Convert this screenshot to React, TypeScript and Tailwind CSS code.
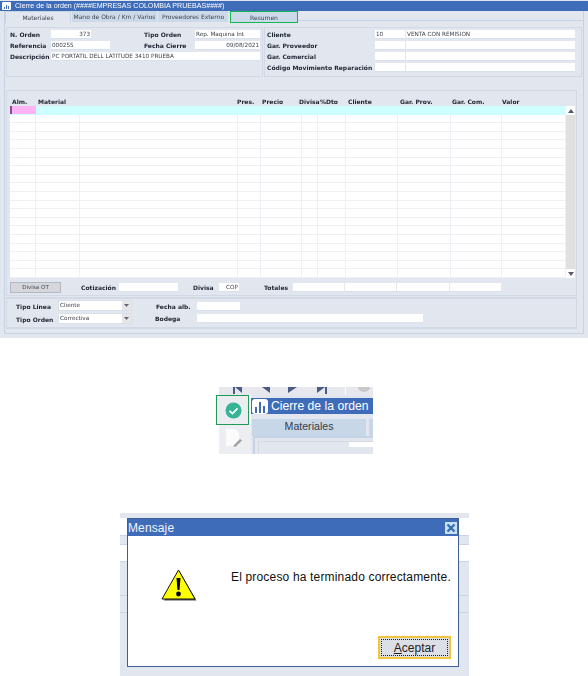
import React from "react";

const sans = "[font-family:'DejaVu_Sans',sans-serif]";

function Label({ children, className = "" }: { children: React.ReactNode; className?: string }) {
  return <span className={`font-bold text-[6px] leading-[9px] whitespace-nowrap text-[#1c2430] ${className}`}>{children}</span>;
}

function Input({ className = "", children, right }: { className?: string; children?: React.ReactNode; right?: boolean }) {
  return (
    <div className={`h-[9px] bg-white border-b border-[#d8e0ec] text-[5.7px] leading-[9px] px-px text-[#3a3f48] whitespace-nowrap overflow-hidden shrink-0 ${right ? "text-right" : ""} ${className}`}>
      {children}
    </div>
  );
}

function Tab({ children, className = "" }: { children: React.ReactNode; className?: string }) {
  return <div className={`flex items-center justify-center text-[6px] text-[#3c4450] whitespace-nowrap ${className}`}>{children}</div>;
}

function Select({ value }: { value: string }) {
  return (
    <div className="flex w-[74px] h-[11px] bg-white border border-[#d9e0ea] shrink-0">
      <div className="flex-1 text-[5.7px] leading-[9px] pl-px text-[#3a3f48]">{value}</div>
      <div className="w-[9px] bg-[#e6e6e6] flex items-center justify-center">
        <svg width="5" height="3" viewBox="0 0 5 3"><path d="M0 0h5L2.5 3z" fill="#666a78" /></svg>
      </div>
    </div>
  );
}

const gridCols = [26, 44, 158, 23, 41, 16, 28, 52, 53, 51, 64];
const headers: [string, number][] = [
  ["Alm.", 26],
  ["Material", 199],
  ["Pres.", 25],
  ["Precio", 37],
  ["Divisa", 21],
  ["%Dto", 28],
  ["Cliente", 52],
  ["Gar. Prov.", 52],
  ["Gar. Com.", 50],
  ["Valor", 40],
];
const rows = Array.from({ length: 20 }, (_, i) => i);

function MainWindow() {
  return (
    <div className="w-[588px] h-[338px] bg-[#e2e6ee] flex flex-col blur-[0.25px]">
      <div className="h-[10px] mt-px bg-[#3f6cb9] flex items-center pl-[2px] gap-[4px] shrink-0">
        <div className="w-[9px] h-[8px] bg-white rounded-[1px] flex items-end justify-center gap-px pb-px">
          <div className="w-px h-[2px] bg-[#3f6cb9]" />
          <div className="w-px h-[4px] bg-[#3f6cb9]" />
          <div className="w-px h-[3px] bg-[#3f6cb9]" />
        </div>
        <span className="text-[7.1px] text-white whitespace-nowrap [font-family:'Liberation_Sans',sans-serif]">
          Cierre de la orden (####EMPRESAS COLOMBIA PRUEBAS####)
        </span>
      </div>
      <div className="mx-[4px] flex-1 mb-[4px] border-x border-b border-[#c6d3e5] flex flex-col">
        <div className="h-[11px] flex shrink-0">
          <Tab className="w-[66px] border-x border-t border-[#c6d3e5] h-[12px] bg-[#e2e6ee]">Materiales</Tab>
          <Tab className="w-[85px] ml-px bg-[#ccd9e9]">Mano de Obra / Km / Varios</Tab>
          <Tab className="w-[70px] ml-px bg-[#ccd9e9]">Proveedores Externo</Tab>
          <Tab className="w-[68px] h-[12px] ml-[2px] bg-[#ccd9e9] border border-[#12b850]">Resumen</Tab>
          <div className="flex-1 border-b border-[#c6d3e5] mb-px" />
        </div>
        <div className="flex gap-[1px] mt-[5px] ml-px mr-px h-[50px] shrink-0">
          <div className="w-[257px] border border-[#d2d9e4] pl-[3px] pt-[2px] flex flex-col gap-[2px]">
            <div className="flex items-center">
              <Label className="w-[41px]">N. Orden</Label>
              <Input className="w-[40px]" right>373</Input>
              <Label className="ml-[53px] w-[51px]">Tipo Orden</Label>
              <Input className="w-[65px]">Rep. Maquina Int</Input>
            </div>
            <div className="flex items-center">
              <Label className="w-[41px]">Referencia</Label>
              <Input className="w-[59px]">000255</Input>
              <Label className="ml-[34px] w-[51px]">Fecha Cierre</Label>
              <Input className="w-[65px]" right>09/08/2021</Input>
            </div>
            <div className="flex items-center">
              <Label className="w-[41px]">Descripción</Label>
              <Input className="w-[209px]">PC PORTATIL DELL LATITUDE 3410 PRUEBA</Input>
            </div>
          </div>
          <div className="flex-1 border border-[#d2d9e4] pl-[2px] pt-[2px] flex flex-col gap-[2px]">
            {[
              ["Cliente", "10", "VENTA CON REMISION"],
              ["Gar. Proveedor", "", ""],
              ["Gar. Comercial", "", ""],
              ["Código Movimiento Reparación", "", ""],
            ].map(([l, a, b]) => (
              <div key={l} className="flex items-center">
                <Label className="w-[108px]">{l}</Label>
                <Input className="w-[30px]">{a}</Input>
                <Input className="w-[169px] ml-px">{b}</Input>
              </div>
            ))}
          </div>
        </div>
        <div className="mt-[13px] ml-px w-[571px] h-[206px] border-t border-x border-b border-[#d2d9e4] shrink-0 flex flex-col">
          <div className="flex pl-[5px] pt-[6px] h-[15px] shrink-0">
            {headers.map(([h, w]) => (
              <div key={h} style={{ width: w }} className="flex items-start">
                <Label>{h}</Label>
              </div>
            ))}
          </div>
          <div className="flex ml-[3px] h-[172px] shrink-0">
            <div className="w-[556px] flex flex-col">
              {rows.map((r) => (
                <div key={r} className={`flex-1 flex border-b ${r === 0 ? "bg-[#ceffff] border-[#ceffff]" : "bg-white border-[#eef0f5]"}`}>
                  {gridCols.map((w, i) => (
                    <div
                      key={i}
                      style={{ width: w }}
                      className={`${r === 0 && i === 0 ? "bg-[#fcb4f4] border-l-2 border-l-[#8a4a90]" : r === 0 ? "" : "border-r border-[#eef0f5]"}`}
                    />
                  ))}
                </div>
              ))}
            </div>
            <div className="w-[9px] bg-[#e0e0e0] flex flex-col justify-between">
              <div className="h-[9px] bg-white flex items-center justify-center">
                <svg width="6" height="4" viewBox="0 0 6 4"><path d="M3 0l3 4H0z" fill="#555a70" /></svg>
              </div>
              <div className="h-[9px] bg-white flex items-center justify-center">
                <svg width="6" height="4" viewBox="0 0 6 4"><path d="M0 0h6L3 4z" fill="#555a70" /></svg>
              </div>
            </div>
          </div>
          <div className="flex items-center pl-[3px] mt-[4px]">
            <div className="w-[51px] h-[11px] bg-[#d5d7dc] border border-[#b4b8c0] text-[5.6px] leading-[8px] text-center text-[#444a55]">Divisa OT</div>
            <Label className="ml-[20px] w-[38px]">Cotización</Label>
            <Input className="w-[59px]" />
            <Label className="ml-[15px] w-[26px]">Divisa</Label>
            <Input className="w-[20px]" right>COP</Input>
            <Label className="ml-[25px] w-[29px]">Totales</Label>
            <Input className="w-[51px]" />
            <Input className="w-[51px] ml-px" />
            <Input className="w-[52px] ml-px" />
            <Input className="w-[51px] ml-px" />
          </div>
        </div>
        <div className="mt-px ml-px w-[571px] h-[32px] border-t-2 border-b-2 border-x border-[#d2d9e4] shrink-0 flex pl-[9px] pt-px">
          <div className="flex flex-col gap-[2px] w-[139px]">
            <div className="flex items-center">
              <Label className="w-[42px] pt-px">Tipo Linea</Label>
              <Select value="Cliente" />
            </div>
            <div className="flex items-center">
              <Label className="w-[42px] pt-px">Tipo Orden</Label>
              <Select value="Correctiva" />
            </div>
          </div>
          <div className="flex flex-col gap-[3px] pt-[2px]">
            <div className="flex items-center">
              <Label className="w-[42px] pl-px">Fecha alb.</Label>
              <Input className="w-[43px]" />
            </div>
            <div className="flex items-center">
              <Label className="w-[42px]">Bodega</Label>
              <Input className="w-[226px]" />
            </div>
          </div>
        </div>
      </div>
    </div>
  );
}

function Crop() {
  return (
    <div className="ml-[216px] mt-[49px] w-[157px] h-[67px] flex flex-col">
      <div className="ml-[3px] h-[8px] bg-[#e6e8ee] shrink-0">
        <svg width="154" height="8" viewBox="0 0 154 8">
          <path d="M14 0h2v7h-2zM16 0h7v6zM43 0h8v6zM69 0h9l-9 6zM98 0h8l-8 6zM106 0h2v7h-2z" fill="#4a5c86" />
          <rect x="126" y="0" width="1" height="8" fill="#fff" />
          <ellipse cx="145" cy="0" rx="6" ry="5" fill="#c8c8c8" />
        </svg>
      </div>
      <div className="flex flex-1 min-h-0">
        <div className="w-[35px] shrink-0 flex flex-col">
          <div className="w-[33px] h-[30px] border-[1.5px] border-[#1f9a58] bg-[#ebedf1] flex items-center justify-center pl-[2px] pt-[1px]">
            <svg width="17" height="17" viewBox="0 0 17 17">
              <circle cx="8.5" cy="8.5" r="8" fill="#37b397" />
              <path d="M4.5 8.8l3 2.8 5-5.2" fill="none" stroke="#fff" strokeWidth="1.7" />
            </svg>
          </div>
          <div className="ml-[3px] flex-1 bg-[#eceef2] flex justify-center pt-[4px] pr-[3px]">
            <svg width="18" height="20" viewBox="0 0 18 20">
              <path d="M1 0h9l4 4v13H1z" fill="#fbfbfb" />
              <path d="M9 16l6-6 2 1.5-6 6-2.5 .5z" fill="#a0a0a0" />
            </svg>
          </div>
        </div>
        <div className="flex-1 min-w-0 bg-[#e2e6ee] flex flex-col overflow-hidden">
          <div className="h-[16px] mt-[3px] bg-[#3f6cb9] flex items-center gap-[3px] shrink-0 whitespace-nowrap">
            <div className="w-[16px] h-[15px] ml-px bg-white rounded-[3px] flex items-end justify-center gap-[2px] pb-[1px]">
              <div className="w-[2px] h-[6px] bg-[#3f6cb9]" />
              <div className="w-[2px] h-[11px] bg-[#3f6cb9]" />
              <div className="w-[2px] h-[7px] bg-[#3f6cb9]" />
            </div>
            <span className="text-[12.2px] text-white [font-family:'Liberation_Sans',sans-serif]">Cierre de la orden</span>
          </div>
          <div className="flex h-[17px] mt-[5px] shrink-0 ml-px">
            <div className="w-[114px] bg-[#c8d7e8] text-[10.6px] leading-[15px] text-center text-[#333b48] [font-family:'Liberation_Sans',sans-serif]">Materiales</div>
            <div className="w-[4px] ml-[3px] bg-[#c8d7e8]" />
          </div>
          <div className="flex-1 ml-[2px] border-t-2 border-l-2 border-[#c6d3e5] pt-[3px] pl-[3px]">
            <div className="h-full border-t border-l border-[#d5dae2]">
              <div className="ml-[90px] h-[5px] bg-white" />
            </div>
          </div>
        </div>
      </div>
    </div>
  );
}

function Stripe({ h, white }: { h: number; white?: boolean }) {
  return <div style={{ height: h }} className={`${white ? "bg-white" : "bg-[#e2e6ee]"} border-t border-[#c8d6e8]`} />;
}

function Dialog() {
  return (
    <div className="relative ml-[120px] mt-[59px] w-[349px] h-[163px] [font-family:'Liberation_Sans',sans-serif]">
      <div className="flex flex-col">
        <div className="h-[5px] bg-[#e2e6ee]" />
        <div className="h-[17px] bg-white" />
        <Stripe h={9} />
        <Stripe h={17} white />
        <Stripe h={34} />
        <Stripe h={17} />
        <Stripe h={64} />
      </div>
      <div className="absolute left-[7px] top-[5px] w-[332px] h-[149px] border border-[#3d5f94] bg-white flex flex-col">
        <div className="h-[17px] bg-[#3f6cb9] flex items-center justify-between pr-[1px] shrink-0">
          <span className="text-[12px] text-[#f2f5fb] tracking-[0.01em]">Mensaje</span>
          <div className="w-[12px] h-[12px] bg-[#c8def2] flex items-center justify-center">
            <svg width="10" height="10" viewBox="0 0 10 10">
              <path d="M1.5 1.5l7 7M8.5 1.5l-7 7" stroke="#2f6fb0" strokeWidth="2.2" />
            </svg>
          </div>
        </div>
        <div className="flex pl-[33px] pt-[33px] h-[79px] shrink-0">
          <svg width="36" height="33" viewBox="0 0 36 33" className="shrink-0">
            <path d="M18.5 2L35.5 31.5H3z" fill="#555" />
            <path d="M17.5 1L34 30H1z" fill="#ffff00" stroke="#111" strokeWidth="1" strokeLinejoin="round" />
            <path d="M15.5 9h4l-1 12h-2z" fill="#000" />
            <circle cx="17.5" cy="25" r="2.4" fill="#000" />
          </svg>
          <span className="ml-[34px] mt-[1px] text-[12px] leading-[14px] tracking-[0.17px] text-[#111] whitespace-nowrap">El proceso ha terminado correctamente.</span>
        </div>
        <div className="flex justify-end pr-[7px] pt-[21px]">
          <div className="w-[73px] h-[23px] border-2 border-[#f2c53d] bg-[#dcdfe6] p-px">
            <div className="h-full border border-dotted border-[#222] flex items-center justify-center text-[12px] text-[#222]">
              <span><span className="underline">A</span>ceptar</span>
            </div>
          </div>
        </div>
      </div>
    </div>
  );
}

export default function App() {
  return (
    <div className={`w-[588px] h-[676px] bg-white overflow-hidden ${sans}`}>
      <MainWindow />
      <Crop />
      <Dialog />
    </div>
  );
}
